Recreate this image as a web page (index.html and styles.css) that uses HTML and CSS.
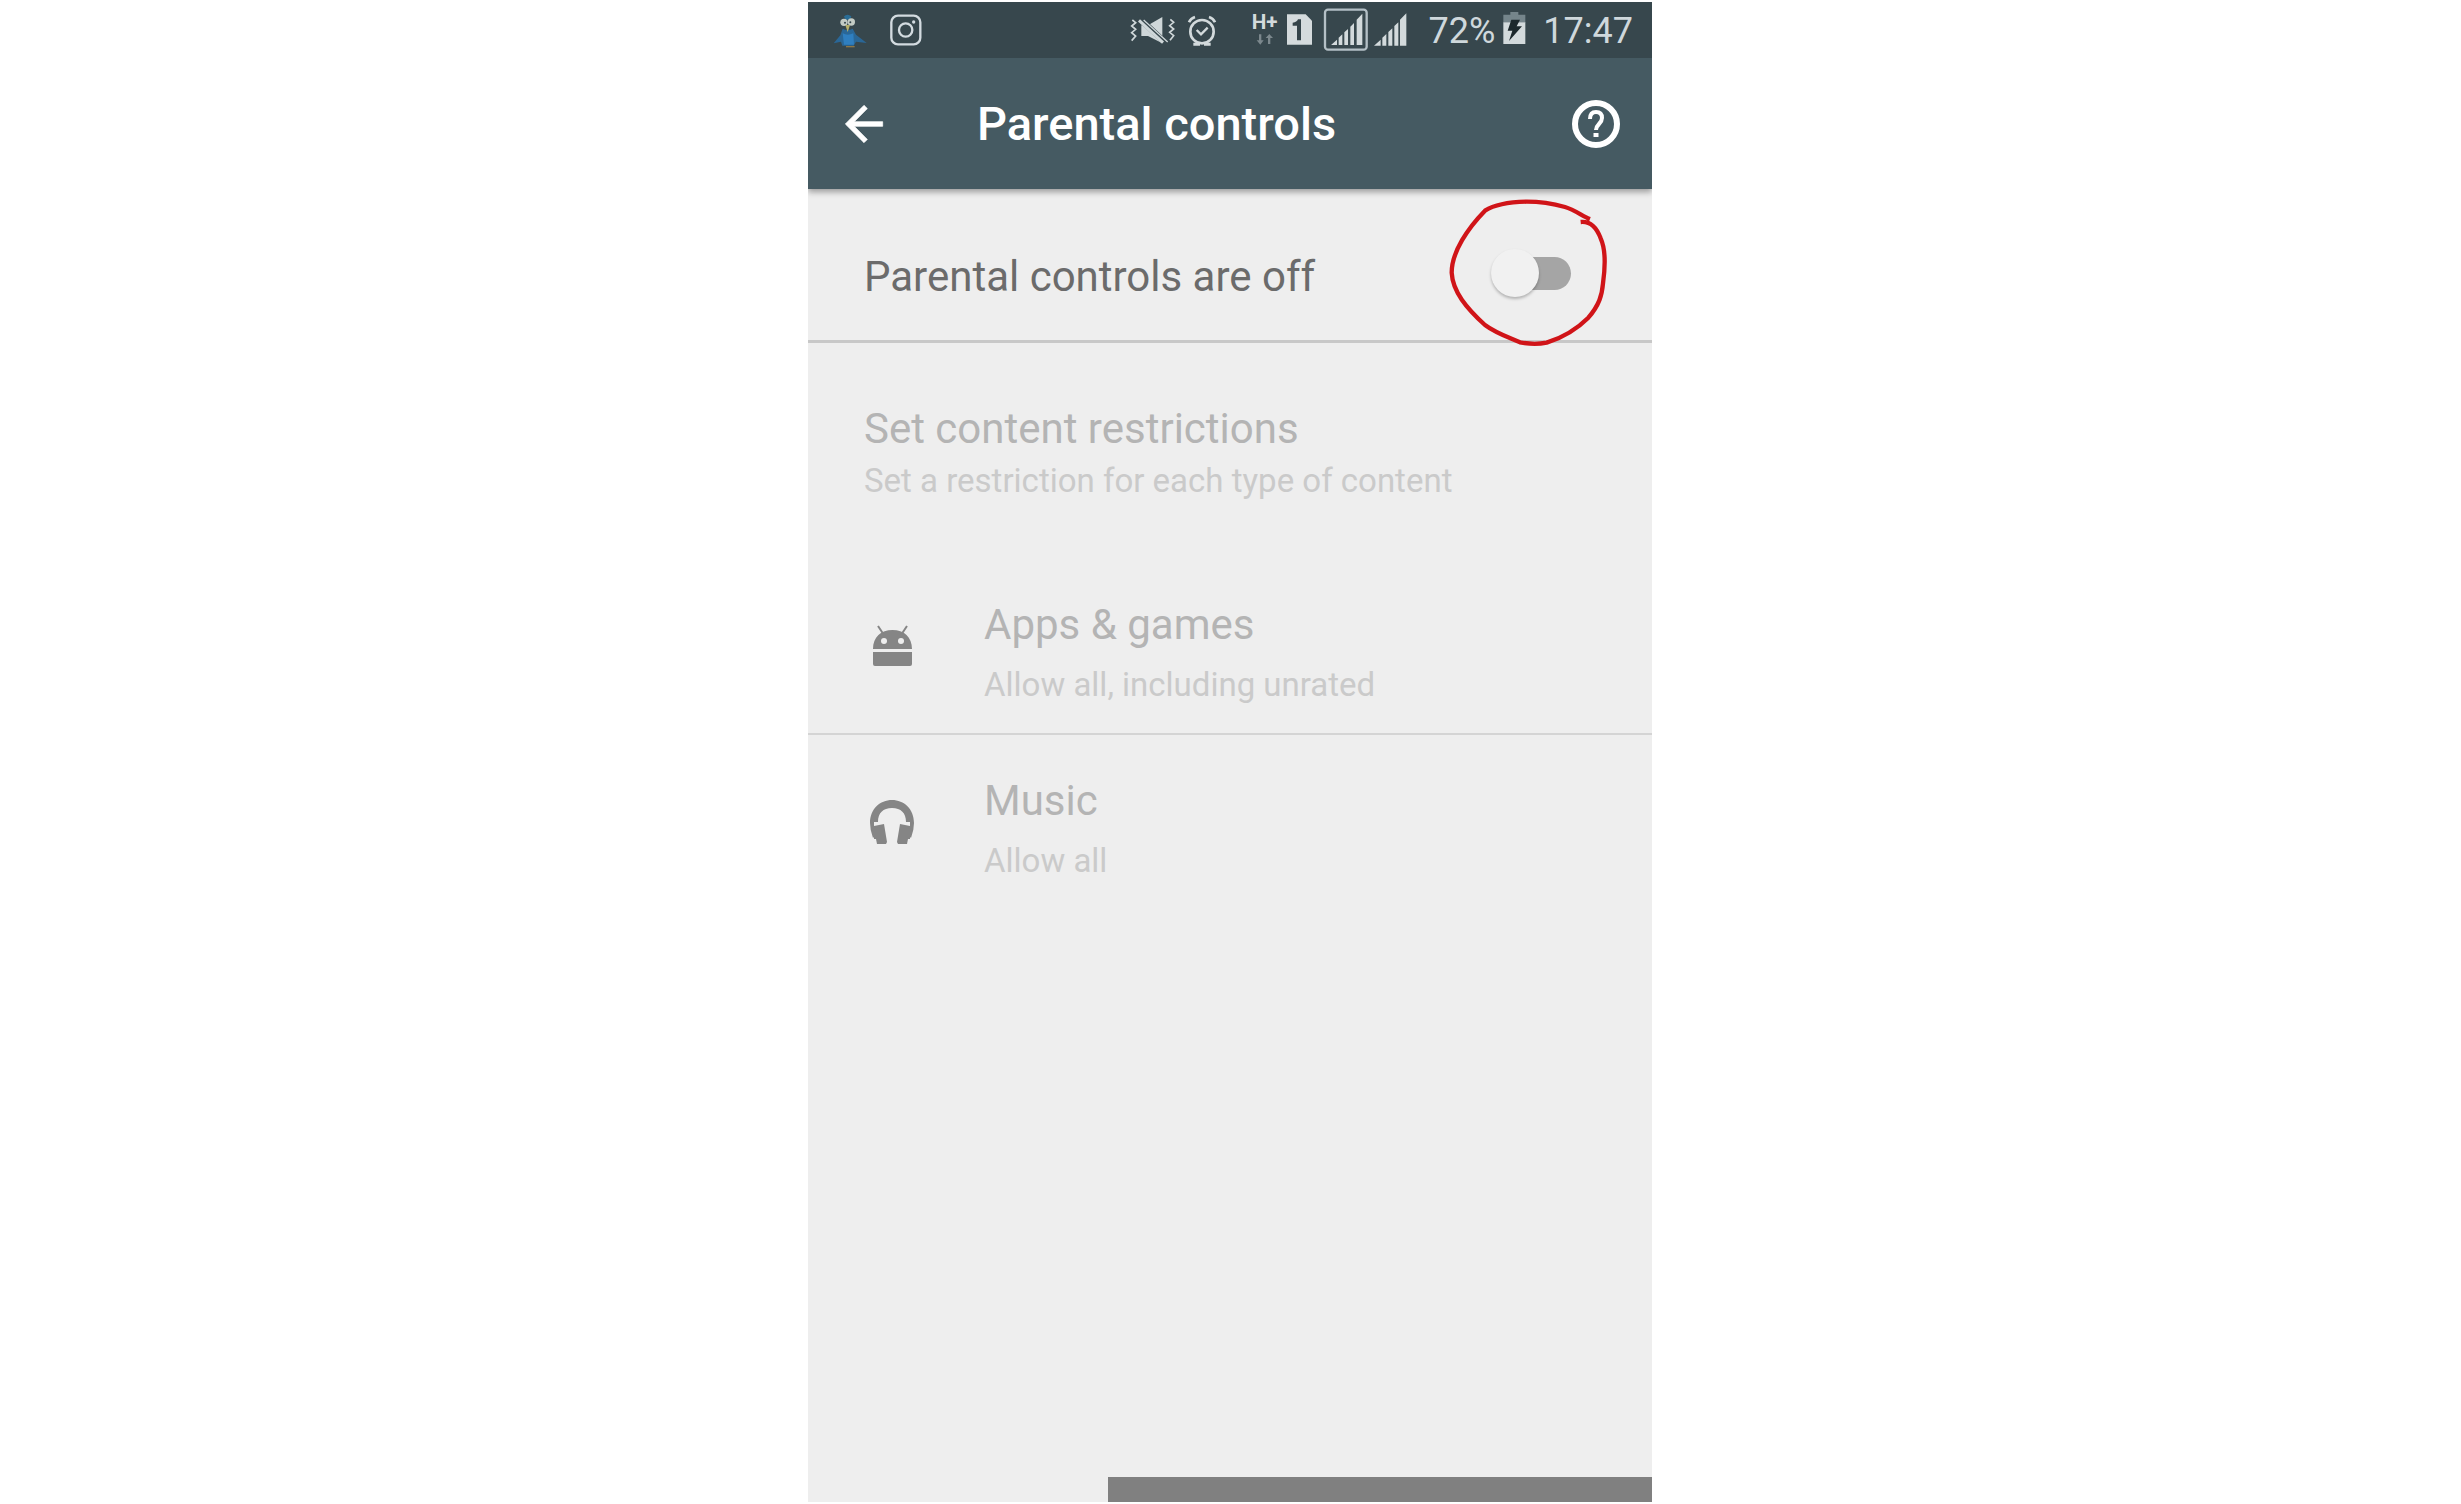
FILE: index.html
```html
<!DOCTYPE html>
<html lang="en">
<head>
<meta charset="utf-8">
<meta name="viewport" content="width=device-width, initial-scale=1">
<title>Parental controls</title>
<link rel="stylesheet" href="styles.css">
</head>
<body>
<div class="phone">
  <div class="status-bar">
    <div class="status-group">
      <svg class="status-icon" width="36" viewBox="96 6 108 168" aria-hidden="true">
        <path d="M132 49q10-10 22 0l-4 10h-14z" fill="#2a6d96"/>
        <path d="M128 86q15 8 30 0l10 18 32 25-32-4-7 12h-34l-4-12-22 5 20-24z" fill="#2a6797"/>
        <path d="M128 100q15 8 32 0l2 34h-30z" fill="#2f7fc0"/>
        <circle cx="132" cy="67" r="11" fill="#c3cbc4"/><circle cx="154" cy="66" r="11" fill="#c3cbc4"/>
        <circle cx="135" cy="68" r="3" fill="#34454b"/><circle cx="151" cy="67" r="3" fill="#34454b"/>
        <path d="M136 75h14l-7 21z" fill="#b7b06a"/>
        <path d="M138 138h26v4h-26z" fill="#8c7748"/>
      </svg>
      <svg class="status-icon" width="36" viewBox="266 6 108 168" aria-hidden="true">
        <rect x="276" y="47" width="87" height="86" rx="20" fill="none" stroke="#d3dbe0" stroke-width="7"/>
        <circle cx="319" cy="90" r="20" fill="none" stroke="#d3dbe0" stroke-width="7"/>
        <circle cx="343" cy="66" r="5" fill="#d3dbe0"/>
      </svg>
    </div>
    <div class="status-group">
      <svg class="status-icon" width="48" viewBox="54 6 144 168" aria-hidden="true">
        <path d="M91 76h20l43-25v79l-43-22H91z" fill="#cfd7d9"/>
        <path d="M84 54l72 67" stroke="#37474d" stroke-width="18"/>
        <path d="M84 61l72 67" stroke="#cfd7d9" stroke-width="9"/>
        <path d="M98 60l72 66" stroke="#cfd7d9" stroke-width="4"/>
        <path d="M64 60l10 8-12 10 12 10-12 10 12 10-12 14M178 58l10 9-12 10 12 10-12 10 12 10-11 14" fill="none" stroke="#cfd7d9" stroke-width="5"/>
      </svg>
      <svg class="status-icon" width="36" viewBox="222 6 108 168" aria-hidden="true">
        <circle cx="273" cy="95" r="35" fill="none" stroke="#d3dadc" stroke-width="8"/>
        <path d="M257 90l13 13 20-20" fill="none" stroke="#d3dadc" stroke-width="7"/>
        <path d="M234 67q5-12 18-16M312 67q-5-12-18-16" fill="none" stroke="#d3dadc" stroke-width="8"/>
        <path d="M247 128h20v9h-20zM279 128h20v9h-20z" fill="#d3dadc"/>
      </svg>
      <svg class="status-icon" width="50" viewBox="354 6 150 168" aria-hidden="true">
        <text x="422" y="86" class="network">H+</text>
        <path d="M444 103h7v18h7l-10 13-11-13h7zM471 132h7v-18h8l-11-12-11 12h7z" fill="#7c888d"/>
      </svg>
      <svg class="status-icon" width="26" viewBox="528 6 78 168" aria-hidden="true">
        <path d="M528 43h56l19 19v72h-75z" fill="#d5dbdd"/>
        <path d="M570 58v63h-12V77h-13v-9q13-1 16-10z" fill="#35444a"/>
      </svg>
      <svg class="status-icon" width="44" viewBox="630 6 132 168" aria-hidden="true">
        <rect x="642" y="29" width="125" height="120" rx="9" fill="none" stroke="#b4c0c6" stroke-width="7"/>
        <path d="M660 135l18-16v16zM683 113l11-10v32h-11zM700 97l11-10v48h-11zM718 80l11-11v66h-11zM737 59l17-18v94h-17z" fill="#d3dadc"/>
      </svg>
      <svg class="status-icon" width="36" viewBox="786 6 108 168" aria-hidden="true">
        <path d="M789 137l20-18v18zM814 113l12-11v35h-12zM832 96l12-11v52h-12zM850 78l12-11v70h-12zM867 59l19-19v97h-19z" fill="#d3dadc"/>
      </svg>
      <span class="battery-level">72%</span>
      <svg class="status-icon" width="24" viewBox="314 6 72 168" aria-hidden="true">
        <path d="M315 44h21v-8h24v8h21v24h-66z" fill="#75858b"/>
        <path d="M315 67h66v65h-66z" fill="#d3dadc"/>
        <path d="M339 59h26l-10 20h16l-39 44 10-31h-14z" fill="#1c282c"/>
      </svg>
      <time class="clock">17:47</time>
    </div>
  </div>

  <header class="app-bar">
    <button class="icon-button" type="button" aria-label="Back">
      <svg viewBox="0 0 24 24" width="56" height="56"><path d="M20 11H7.83l5.59-5.59L12 4l-8 8 8 8 1.41-1.41L7.83 13H20v-2z" fill="#fff" stroke="#fff" stroke-width=".3"/></svg>
    </button>
    <h1 class="app-title">Parental controls</h1>
    <button class="icon-button" type="button" aria-label="Help">
      <svg viewBox="0 0 56 56" width="56" height="56" fill="none" stroke="#fff">
        <circle cx="28" cy="28" r="21" stroke-width="6"/>
        <path d="M22 23q0-7 6-7t6 6q0 3-3 6t-3 6" stroke-width="4"/>
        <path d="M28 37v4" stroke-width="5"/>
      </svg>
    </button>
  </header>

  <main class="content">
    <div class="switch-row">
      <label class="switch-label" for="controls">Parental controls are off</label>
      <input class="switch" id="controls" type="checkbox" role="switch">
      <svg class="marker" viewBox="45 45 510 480" width="170" height="160" aria-hidden="true">
        <path d="M480 117C460 110 435 90 405 81C365 70 330 65 290 65C240 66 195 73 165 92C115 143 65 215 65 278C68 335 110 385 165 435C195 458 230 470 270 487C300 493 330 492 350 488C400 472 445 443 475 413C508 375 516 345 519 310C526 260 528 210 512 175C500 143 480 123 452 126" fill="none" stroke="#d01418" stroke-width="13"/>
      </svg>
    </div>

    <section class="intro">
      <h2 class="item-title">Set content restrictions</h2>
      <p class="item-note">Set a restriction for each type of content</p>
    </section>

    <ul class="items">
      <li class="item">
        <svg class="item-icon" viewBox="0 0 48 48" width="48" height="48" aria-hidden="true">
          <path d="M4 27C4 15 12 8 23.500 8S43 15 43 27zM4 30h39v12q0 2-2 2H6q-2 0-2-2z" fill="#858585"/>
          <path d="M9 4l6 9M38 4l-6 9" stroke="#858585" stroke-width="2"/>
          <circle cx="15" cy="19" r="3" fill="#eee"/><circle cx="32" cy="19" r="3" fill="#eee"/>
        </svg>
        <div class="item-text">
          <h3 class="item-title">Apps &amp; games</h3>
          <p class="item-note">Allow all, including unrated</p>
        </div>
      </li>
      <li class="item">
        <svg class="item-icon" viewBox="0 0 48 48" width="48" height="48" aria-hidden="true">
          <path d="M4 40Q1 32 1 25C1 11 11 2 23 2S45 11 45 25q0 7-3 15l-1-1V24h-4C37 15 32 10 23 10S9 15 9 24H5v15z" fill="#858585"/>
          <path d="M5 28l10-2 3 18-1 2H8l-1-5H5zM41 28l-10-2-3 18 1 2h9l1-5h2z" fill="#858585"/>
        </svg>
        <div class="item-text">
          <h3 class="item-title">Music</h3>
          <p class="item-note">Allow all</p>
        </div>
      </li>
    </ul>
  </main>
  <div class="bottom-strip"></div>
</div>
</body>
</html>
```
FILE: styles.css
```css
* { box-sizing: border-box; }

body {
  margin: 0;
  padding: 2px 1px 2px 0;
  background: #fff;
  font-family: Roboto, "Liberation Sans", sans-serif;
}

h1, h2, h3, p, ul {
  margin: 0;
  padding: 0;
  font-weight: 400;
}

.phone {
  display: flex;
  flex-direction: column;
  width: 100%;
  max-width: 844px;
  min-height: calc(100vh - 4px);
  margin: 0 auto;
  background: #eee;
}

.status-bar {
  display: flex;
  justify-content: space-between;
  padding: 0 19px 0 24px;
  background: #37474d;
  color: #cfd8dc;
  font-size: 36px;
  line-height: 56px;
}

.status-group {
  display: flex;
  align-items: center;
  gap: 8px;
}

.status-group:first-child { gap: 20px; }

.status-icon {
  display: block;
  height: 56px;
  overflow: visible;
}

.network {
  font-size: 62px;
  font-weight: 700;
  fill: #d3dadc;
}

.battery-level,
.clock {
  height: 56px;
  padding-top: 1px;
}

.battery-level { margin-left: 12px; }
.clock { margin-left: 8px; }

.app-bar {
  position: relative;
  display: flex;
  align-items: center;
  padding: 38px 28px 37px;
  background: #455a62;
  box-shadow: 0 3px 6px rgba(0, 0, 0, .35);
  clip-path: inset(0 0 -12px 0);
  color: #fff;
}

.icon-button {
  flex: none;
  padding: 0;
  border: 0;
  background: none;
  cursor: pointer;
}

.icon-button svg { display: block; }

.app-title {
  flex: 1;
  margin-left: 85px;
  font-size: 47px;
  font-weight: 500;
  line-height: 56px;
}

.content { flex: 1; }

.switch-row {
  position: relative;
  display: flex;
  align-items: flex-start;
  justify-content: space-between;
  padding: 60px 81px 35px 56px;
  border-bottom: 3px solid #c8c8c8;
}

.switch-label {
  color: #6b6b6b;
  font-size: 42px;
  line-height: 56px;
}

.switch {
  appearance: none;
  position: relative;
  display: flex;
  align-items: center;
  width: 80px;
  height: 48px;
  margin: 0;
}

.switch::before {
  content: "";
  flex: 1;
  height: 33px;
  margin-left: 8px;
  border-radius: 17px;
  background: #a5a5a5;
}

.switch::after {
  content: "";
  position: absolute;
  left: 0;
  top: 0;
  width: 48px;
  height: 48px;
  border-radius: 50%;
  background: #f1f1f1;
  box-shadow: 0 2px 3px rgba(0, 0, 0, .25);
}

.marker {
  position: absolute;
  top: 6px;
  right: 37px;
  pointer-events: none;
}

.intro { padding: 58px 56px; }
.intro .item-note { margin-top: 4px; }

.items { list-style: none; }

.item {
  display: flex;
  align-items: center;
  gap: 67px;
  padding: 38px 61px 28px;
  border-bottom: 2px solid #d4d4d4;
}

.item:last-child { border-bottom-color: transparent; }

.item-icon {
  flex: none;
  margin-bottom: 10px;
}

.item-title {
  color: #b4b4b4;
  font-size: 42px;
  line-height: 56px;
}

.item-note {
  margin-top: 12px;
  color: #cacaca;
  font-size: 33px;
  line-height: 40px;
}

.bottom-strip {
  height: 25px;
  margin-left: 300px;
  background: #808080;
}
```
